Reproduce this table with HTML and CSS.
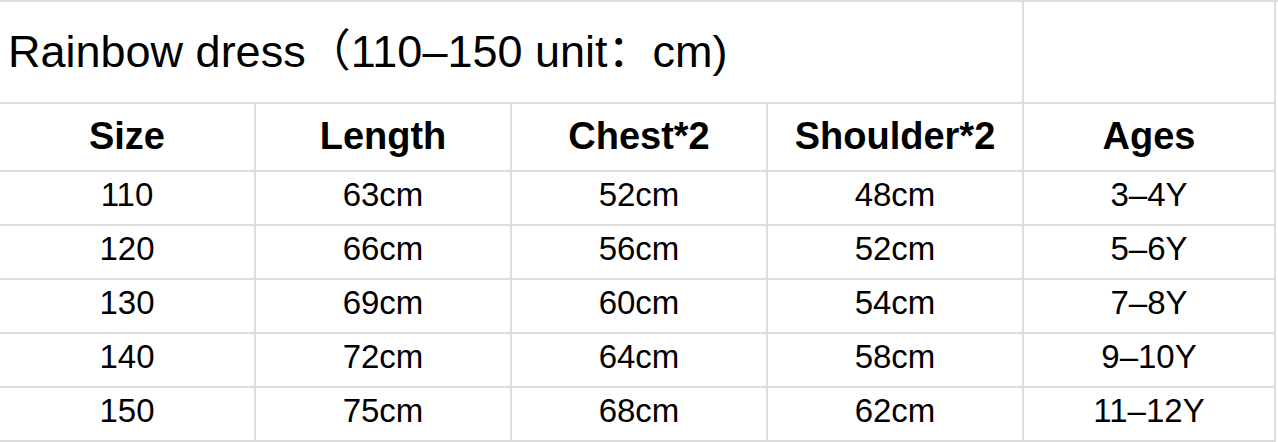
FILE: index.html
```html
<!DOCTYPE html>
<html>
<head>
<meta charset="utf-8">
<link rel="stylesheet" href="styles.css">
</head>
<body>
<div class="sheet">
  <div class="cell title">Rainbow dress（110–150 unit：cm)</div>
  <div class="cell"></div>

  <div class="cell head">Size</div>
  <div class="cell head">Length</div>
  <div class="cell head">Chest*2</div>
  <div class="cell head">Shoulder*2</div>
  <div class="cell head">Ages</div>

  <div class="cell data">110</div><div class="cell data">63cm</div><div class="cell data">52cm</div><div class="cell data">48cm</div><div class="cell data">3–4Y</div>
  <div class="cell data">120</div><div class="cell data">66cm</div><div class="cell data">56cm</div><div class="cell data">52cm</div><div class="cell data">5–6Y</div>
  <div class="cell data">130</div><div class="cell data">69cm</div><div class="cell data">60cm</div><div class="cell data">54cm</div><div class="cell data">7–8Y</div>
  <div class="cell data">140</div><div class="cell data">72cm</div><div class="cell data">64cm</div><div class="cell data">58cm</div><div class="cell data">9–10Y</div>
  <div class="cell data">150</div><div class="cell data">75cm</div><div class="cell data">68cm</div><div class="cell data">62cm</div><div class="cell data">11–12Y</div>
</div>
</body>
</html>
```

FILE: styles.css
```css
html, body {
  margin: 0;
  padding: 0;
  background: #ffffff;
}
body {
  font-family: "Liberation Sans", Arial, "Noto Sans CJK SC", sans-serif;
  color: #000000;
  overflow: hidden;
}
.sheet {
  display: grid;
  grid-template-columns: 256px 256px 256px 256px 252px;
  grid-template-rows: 102px 68px repeat(5, 54px);
  border-top: 2px solid #dcdcdc;
}
.cell {
  box-sizing: border-box;
  border-right: 2px solid #dcdcdc;
  border-bottom: 2px solid #dcdcdc;
  display: flex;
  align-items: center;
  justify-content: center;
  white-space: nowrap;
}
.title {
  grid-column: 1 / span 4;
  justify-content: flex-start;
  padding-left: 8px;
  padding-bottom: 10px;
  font-size: 45px;
}
.title-gap {
  letter-spacing: 0;
}
.head {
  font-weight: bold;
  font-size: 38px;
  padding-bottom: 2px;
}
.data {
  font-size: 33px;
  padding-bottom: 6px;
}
```
